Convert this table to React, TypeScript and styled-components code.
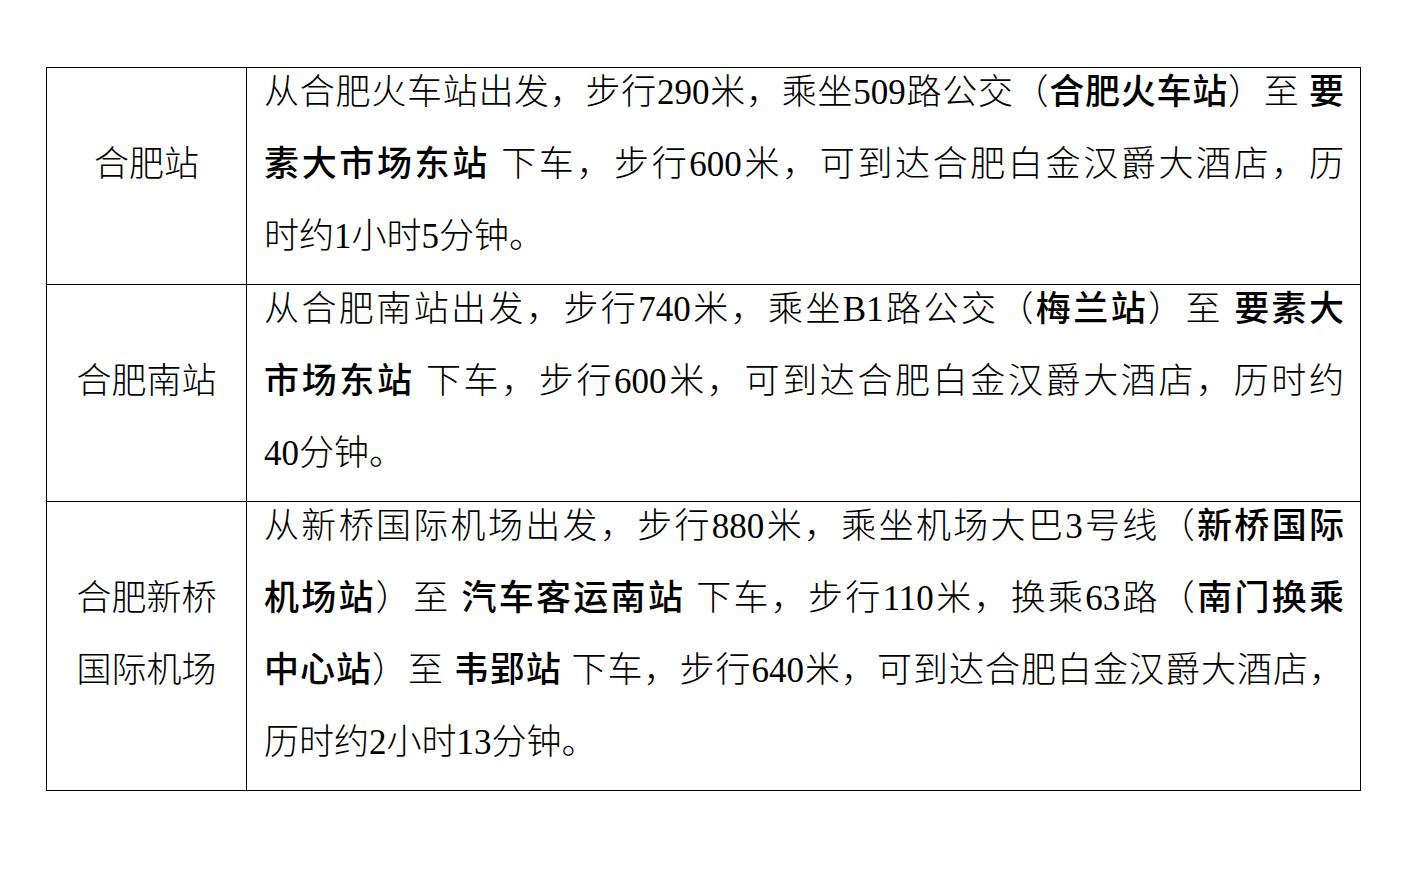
import React from 'react'
import styled, { createGlobalStyle } from 'styled-components'

const GlobalStyle = createGlobalStyle`
  html, body {
    margin: 0;
    padding: 0;
    background: #ffffff;
  }
  body {
    font-family: "Liberation Serif", "Noto Sans CJK SC", serif;
    color: #000000;
  }
`

const Page = styled.div`
  width: 1412px;
  height: 876px;
  box-sizing: border-box;
  padding: 67px 0 0 46px;
  background: #ffffff;
`

const Table = styled.div`
  width: 1315px;
  display: grid;
  grid-template-columns: 200px 1fr;
  box-sizing: border-box;
  border-left: 1px solid #000;
  border-top: 1px solid #000;
`

const Cell = styled.div<{ $label?: boolean }>`
  box-sizing: border-box;
  border-right: 1px solid #000;
  border-bottom: 1px solid #000;
  padding: ${p => (p.$label ? '0 4px' : '0 16px 0 17px')};
  display: flex;
  flex-direction: column;
  justify-content: ${p => (p.$label ? 'center' : 'flex-start')};
  align-items: stretch;
`

const Lines = styled.div<{ $center?: boolean }>`
  margin: -11px 0 11px;
  font-size: 35px;
  line-height: 72px;
  font-weight: 300;
  text-align: ${p => (p.$center ? 'center' : 'left')};
`

const Line = styled.div<{ $fill?: boolean }>`
  white-space: nowrap;
  text-align: ${p => (p.$fill ? 'justify' : 'inherit')};
  text-align-last: ${p => (p.$fill ? 'justify' : 'auto')};
`

const Strong = styled.span`
  font-weight: 500;
`

type Row = { label: string[]; body: string[] }

const rows: Row[] = [
  {
    label: ['合肥站'],
    body: [
      '从合肥火车站出发，步行290米，乘坐509路公交（{合肥火车站}）至 {要}',
      '{素大市场东站} 下车，步行600米，可到达合肥白金汉爵大酒店，历',
      '时约1小时5分钟。',
    ],
  },
  {
    label: ['合肥南站'],
    body: [
      '从合肥南站出发，步行740米，乘坐B1路公交（{梅兰站}）至 {要素大}',
      '{市场东站} 下车，步行600米，可到达合肥白金汉爵大酒店，历时约',
      '40分钟。',
    ],
  },
  {
    label: ['合肥新桥', '国际机场'],
    body: [
      '从新桥国际机场出发，步行880米，乘坐机场大巴3号线（{新桥国际}',
      '{机场站}）至 {汽车客运南站} 下车，步行110米，换乘63路（{南门换乘}',
      '{中心站}）至 {韦郢站} 下车，步行640米，可到达合肥白金汉爵大酒店，',
      '历时约2小时13分钟。',
    ],
  },
]

// "{...}" marks the bold station names
function renderLine(text: string) {
  const parts = text.split(/(\{[^}]*\})/g).filter(Boolean)
  return parts.map((part, i) =>
    part.startsWith('{') ? <Strong key={i}>{part.slice(1, -1)}</Strong> : <React.Fragment key={i}>{part}</React.Fragment>
  )
}

export default function App() {
  return (
    <>
      <GlobalStyle />
      <Page>
        <Table>
          {rows.map((row, r) => (
            <React.Fragment key={r}>
              <Cell $label>
                <Lines $center>
                  {row.label.map((l, i) => (
                    <Line key={i}>{l}</Line>
                  ))}
                </Lines>
              </Cell>
              <Cell>
                <Lines>
                  {row.body.map((l, i) => (
                    <Line key={i} $fill={i < row.body.length - 1}>
                      {renderLine(l)}
                    </Line>
                  ))}
                </Lines>
              </Cell>
            </React.Fragment>
          ))}
        </Table>
      </Page>
    </>
  )
}
